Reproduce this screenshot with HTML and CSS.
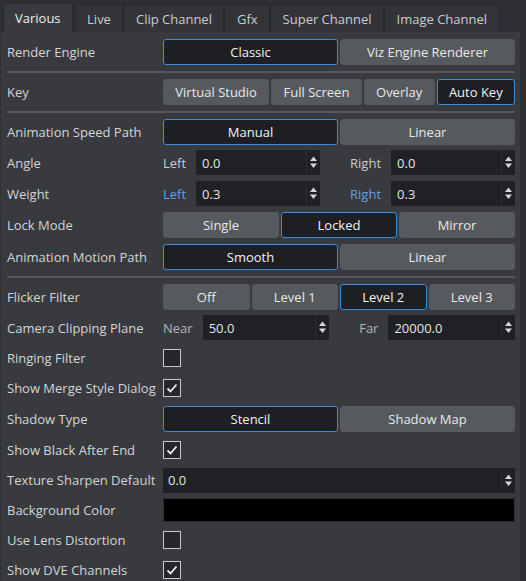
FILE: index.html
```html
<!DOCTYPE html>
<html>
<head>
<meta charset="utf-8">
<link rel="stylesheet" href="styles.css">
</head>
<body>
<div class="tabs">
  <div class="tab active">Various</div>
  <div class="tab">Live</div>
  <div class="tab">Clip Channel</div>
  <div class="tab">Gfx</div>
  <div class="tab">Super Channel</div>
  <div class="tab">Image Channel</div>
</div>
<div class="panel">
  <div class="row">
    <div class="label">Render Engine</div>
    <div class="ctrl seg"><div class="btn sel">Classic</div><div class="btn">Viz Engine Renderer</div></div>
  </div>
  <div class="sep"></div>
  <div class="row">
    <div class="label">Key</div>
    <div class="ctrl seg auto"><div class="btn">Virtual Studio</div><div class="btn">Full Screen</div><div class="btn">Overlay</div><div class="btn sel">Auto Key</div></div>
  </div>
  <div class="sep"></div>
  <div class="row">
    <div class="label">Animation Speed Path</div>
    <div class="ctrl seg"><div class="btn sel">Manual</div><div class="btn">Linear</div></div>
  </div>
  <div class="row">
    <div class="label">Angle</div>
    <div class="ctrl pair">
      <span class="sub">Left</span>
      <div class="spin"><span class="val">0.0</span><span class="arrows"><svg width="13" height="25" viewBox="0 0 13 25"><polygon points="3,11 6.5,6.5 10,11"/><polygon points="3,13.5 10,13.5 6.5,18"/></svg></span></div>
      <span class="sub second">Right</span>
      <div class="spin"><span class="val">0.0</span><span class="arrows"><svg width="13" height="25" viewBox="0 0 13 25"><polygon points="3,11 6.5,6.5 10,11"/><polygon points="3,13.5 10,13.5 6.5,18"/></svg></span></div>
    </div>
  </div>
  <div class="row">
    <div class="label">Weight</div>
    <div class="ctrl pair">
      <span class="sub blue">Left</span>
      <div class="spin"><span class="val">0.3</span><span class="arrows"><svg width="13" height="25" viewBox="0 0 13 25"><polygon points="3,11 6.5,6.5 10,11"/><polygon points="3,13.5 10,13.5 6.5,18"/></svg></span></div>
      <span class="sub blue second">Right</span>
      <div class="spin"><span class="val">0.3</span><span class="arrows"><svg width="13" height="25" viewBox="0 0 13 25"><polygon points="3,11 6.5,6.5 10,11"/><polygon points="3,13.5 10,13.5 6.5,18"/></svg></span></div>
    </div>
  </div>
  <div class="row tall">
    <div class="label">Lock Mode</div>
    <div class="ctrl seg"><div class="btn">Single</div><div class="btn sel">Locked</div><div class="btn">Mirror</div></div>
  </div>
  <div class="row">
    <div class="label">Animation Motion Path</div>
    <div class="ctrl seg"><div class="btn sel">Smooth</div><div class="btn">Linear</div></div>
  </div>
  <div class="sep"></div>
  <div class="row">
    <div class="label">Flicker Filter</div>
    <div class="ctrl seg"><div class="btn">Off</div><div class="btn">Level 1</div><div class="btn sel">Level 2</div><div class="btn">Level 3</div></div>
  </div>
  <div class="row">
    <div class="label">Camera Clipping Plane</div>
    <div class="ctrl pair">
      <span class="sub dim">Near</span>
      <div class="spin"><span class="val">50.0</span><span class="arrows"><svg width="13" height="25" viewBox="0 0 13 25"><polygon points="3,11 6.5,6.5 10,11"/><polygon points="3,13.5 10,13.5 6.5,18"/></svg></span></div>
      <span class="sub dim second">Far</span>
      <div class="spin"><span class="val">20000.0</span><span class="arrows"><svg width="13" height="25" viewBox="0 0 13 25"><polygon points="3,11 6.5,6.5 10,11"/><polygon points="3,13.5 10,13.5 6.5,18"/></svg></span></div>
    </div>
  </div>
  <div class="row short">
    <div class="label">Ringing Filter</div>
    <div class="ctrl"><div class="cb"></div></div>
  </div>
  <div class="row short">
    <div class="label">Show Merge Style Dialog</div>
    <div class="ctrl"><div class="cb"><svg width="16" height="16" viewBox="0 0 16 16"><polyline points="3.5,8.5 6.5,11.5 12.5,4.5"/></svg></div></div>
  </div>
  <div class="row">
    <div class="label">Shadow Type</div>
    <div class="ctrl seg"><div class="btn sel">Stencil</div><div class="btn">Shadow Map</div></div>
  </div>
  <div class="row">
    <div class="label">Show Black After End</div>
    <div class="ctrl"><div class="cb"><svg width="16" height="16" viewBox="0 0 16 16"><polyline points="3.5,8.5 6.5,11.5 12.5,4.5"/></svg></div></div>
  </div>
  <div class="row short">
    <div class="label">Texture Sharpen Default</div>
    <div class="ctrl"><div class="spin wide"><span class="val">0.0</span><span class="arrows"><svg width="13" height="25" viewBox="0 0 13 25"><polygon points="3,11 6.5,6.5 10,11"/><polygon points="3,13.5 10,13.5 6.5,18"/></svg></span></div></div>
  </div>
  <div class="row short">
    <div class="label">Background Color</div>
    <div class="ctrl"><div class="color"></div></div>
  </div>
  <div class="row short">
    <div class="label">Use Lens Distortion</div>
    <div class="ctrl"><div class="cb"></div></div>
  </div>
  <div class="row short">
    <div class="label">Show DVE Channels</div>
    <div class="ctrl"><div class="cb"><svg width="16" height="16" viewBox="0 0 16 16"><polyline points="3.5,8.5 6.5,11.5 12.5,4.5"/></svg></div></div>
  </div>
</div>
</body>
</html>
```

FILE: styles.css
```css
html, body {
  margin: 0;
  padding: 0;
}
body {
  width: 526px;
  height: 581px;
  overflow: hidden;
  background: #2d2f33;
  font-family: "Open Sans", "Noto Sans", sans-serif;
  font-size: 13px;
  color: #d4d5d7;
}
.tabs {
  display: flex;
  align-items: flex-end;
  height: 32px;
  padding-left: 3px;
  box-sizing: border-box;
}
.tab {
  height: 28px;
  padding: 0 11.5px;
  box-sizing: border-box;
  display: flex;
  align-items: center;
  background: #323438;
  border: 1px solid #26282b;
  border-bottom: none;
  border-radius: 2px 2px 0 0;
  color: #cbcccf;
  white-space: nowrap;
}
.tab.active {
  height: 29px;
  padding: 0 11px;
  background: #383a3e;
  color: #efefef;
  margin-right: 2px;
}
.panel {
  width: 520px;
  height: 549px;
  box-sizing: border-box;
  background: #383a3e;
  border-left: 1px solid #2e3034;
  padding: 4px 5px 0 6px;
}
.row {
  display: flex;
  align-items: center;
  height: 31px;
}
.row.tall { height: 32px; }
.row.short { height: 30px; }
.label {
  width: 156px;
  flex: none;
  white-space: nowrap;
}
.ctrl {
  flex: 1;
  display: flex;
  align-items: center;
}
.sep {
  height: 2px;
  background: #56585c;
  margin: 4px 0 3px 0;
}
.seg { gap: 2px; }
.btn {
  flex: 1 1 0;
  height: 26px;
  box-sizing: border-box;
  display: flex;
  align-items: center;
  justify-content: center;
  background: #56595d;
  border: 1px solid #56595d;
  border-radius: 3px;
  color: #e8e9ea;
  white-space: nowrap;
}
.seg.auto .btn { flex: 1 1 auto; }
.btn.sel {
  background: #1d1f23;
  border-color: #3a8ee2;
  color: #f2f2f2;
}
.sub {
  margin-right: 10px;
  color: #cbcccf;
  white-space: nowrap;
}
.sub.second { margin-left: 30px; }
.sub.blue { color: #5aa3e6; }
.sub.dim { color: #b6b7ba; }
.spin {
  flex: 1;
  height: 25px;
  box-sizing: border-box;
  display: flex;
  align-items: center;
  background: #1f2125;
  padding-left: 6px;
  color: #e4e5e6;
}
.spin.wide { padding-left: 5px; }
.val { flex: 1; }
.arrows {
  width: 14px;
  height: 100%;
  box-sizing: border-box;
  border-left: 1px solid #2a2d31;
  display: flex;
  align-items: center;
  justify-content: center;
}
.arrows svg { fill: #d6d7d9; display: block; }
.cb {
  width: 18px;
  height: 18px;
  box-sizing: border-box;
  border: 1px solid #c8c9cb;
  background: #25272b;
  display: flex;
  align-items: center;
  justify-content: center;
}
.cb svg {
  display: block;
  fill: none;
  stroke: #f2f2f2;
  stroke-width: 1.8;
}
.color {
  flex: 1;
  height: 24px;
  box-sizing: border-box;
  background: #000000;
  border: 1px solid #2b2d31;
}
```
